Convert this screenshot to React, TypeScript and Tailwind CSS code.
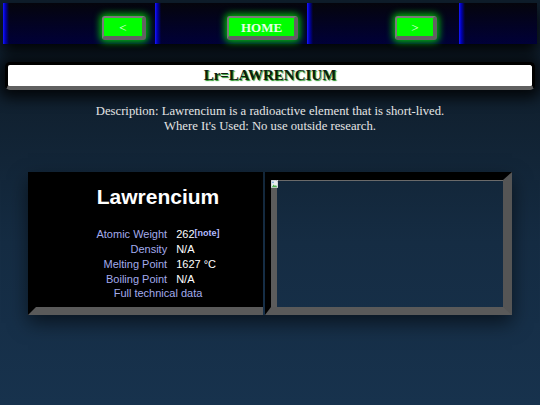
import React from "react";

function NavButton({ label, bold }: { label: string; bold?: boolean }) {
  return (
    <div
      className={`flex h-[24px] items-center justify-center rounded-[3px] border-t-2 border-l-2 border-r-[4px] border-b-[4px] border-t-[#7a7a7a] border-l-[#7a7a7a] border-r-[#626262] border-b-[#626262] bg-[#00ff00] px-[8px] text-[13px] leading-none text-[#e6ffe6] shadow-[0_0_7px_2px_rgba(0,255,0,0.75)] ${
        bold ? "font-bold" : "font-normal"
      }`}
      style={{ fontFamily: '"Liberation Serif", serif' }}
    >
      {label}
    </div>
  );
}

function Segment({
  width,
  pr,
  children,
}: {
  width: string;
  pr: string;
  children?: React.ReactNode;
}) {
  return (
    <div
      className={`flex h-full items-end justify-end pb-[4px] bg-[linear-gradient(to_right,#1a1aff_0px,#0000c0_2px,rgba(0,0,80,0)_6px),linear-gradient(to_bottom,#05050c,#000038)] ${width} ${pr}`}
    >
      {children}
    </div>
  );
}

export default function App() {
  const rows: [string, React.ReactNode][] = [
    [
      "Atomic Weight",
      <span>
        262
        <sup className="relative top-[-2px] text-[9px] font-bold text-[#b4bcff]">[note]</sup>
      </span>,
    ],
    ["Density", "N/A"],
    ["Melting Point", "1627 °C"],
    ["Boiling Point", "N/A"],
  ];

  return (
    <div className="min-h-screen w-full bg-[linear-gradient(to_bottom,#0f1e2c_0%,#10202f_25%,#152c43_60%,#17324d_100%)] pt-[3px]">
      {/* Nav */}
      <div className="mx-[3px] flex h-[41px] shadow-[0_8px_14px_rgba(0,0,0,0.85)]">
        <Segment width="w-[152px]" pr="pr-[9px]">
          <div className="w-[44px]">
            <NavButton label="<" />
          </div>
        </Segment>
        <Segment width="w-[152px]" pr="pr-[9px]">
          <div className="w-[71px]">
            <NavButton label="HOME" bold />
          </div>
        </Segment>
        <Segment width="w-[152px]" pr="pr-[22px]">
          <div className="w-[42px]">
            <NavButton label=">" />
          </div>
        </Segment>
        <Segment width="flex-1" pr="pr-0" />
      </div>

      {/* Title */}
      <div className="mx-[5px] mt-[18px] h-[28px] rounded-[5px] border-t-[3px] border-l-[3px] border-r-[3px] border-b-[4px] border-t-black border-l-black border-r-black border-b-[#606060] bg-white shadow-[0_2px_14px_6px_rgba(0,0,0,0.8)]">
        <div
          className="flex h-full items-center justify-center text-[15px] font-bold leading-none text-[#0c1f0c] [text-shadow:1px_1px_1px_#1f8f1f]"
          style={{ fontFamily: '"Liberation Serif", serif' }}
        >
          Lr=LAWRENCIUM
        </div>
      </div>

      {/* Description */}
      <div
        className="mt-[14px] text-center text-[12.7px] leading-[15px] text-[#e4e4e4]"
        style={{ fontFamily: '"Liberation Serif", serif' }}
      >
        <div>Description: Lawrencium is a radioactive element that is short-lived.</div>
        <div>Where It's Used: No use outside research.</div>
      </div>

      {/* Card */}
      <div className="mx-auto mt-[38px] flex w-[484px] gap-[2px] shadow-[0_8px_18px_rgba(0,0,0,0.55)]">
        {/* Left cell */}
        <div
          className="h-[143px] w-[235px] border-t-[8px] border-l-[8px] border-b-[8px] border-t-black border-l-black border-b-[#5a5a5a] bg-black pl-[17px]"
          style={{ fontFamily: '"Liberation Sans", Arial, sans-serif' }}
        >
          <div className="flex flex-col items-center">
            <div className="mt-[5px] text-[21px] font-bold leading-[24px] text-white">
              Lawrencium
            </div>
            <div className="mt-[18px] grid grid-cols-[auto_auto] gap-x-[9px] text-[11px] leading-[15px]">
              {rows.map(([k, v]) => (
                <React.Fragment key={k}>
                  <div className="text-right text-[#a3abec]">{k}</div>
                  <div className="text-white">{v}</div>
                </React.Fragment>
              ))}
              <div className="col-span-2 -mt-[1px] text-center text-[#a3abec]">Full technical data</div>
            </div>
          </div>
        </div>

        {/* Right cell */}
        <div className="h-[143px] flex-1 border-t-[8px] border-l-[6px] border-r-[9px] border-b-[8px] border-t-black border-l-black border-r-[#555555] border-b-[#5a5a5a]">
          <div className="relative h-full w-full border-t border-l-[6px] border-t-[#6a6a6a] border-l-[#5c5c5c]">
            <svg
              className="absolute left-[-6px] top-[-1px]"
              width="7"
              height="8"
              viewBox="0 0 7 8"
            >
              <rect x="0" y="0" width="7" height="8" fill="#d8dde2" />
              <path d="M0 0 H5 L7 2 V8 H0 Z" fill="#e8ecef" stroke="#9aa3aa" strokeWidth="0.6" />
              <path d="M0.8 7.2 L2.6 4.6 L4 6 L5 5 L6.2 7.2 Z" fill="#4caf50" />
              <circle cx="2" cy="2.4" r="0.8" fill="#6aa0d8" />
            </svg>
          </div>
        </div>
      </div>
    </div>
  );
}
